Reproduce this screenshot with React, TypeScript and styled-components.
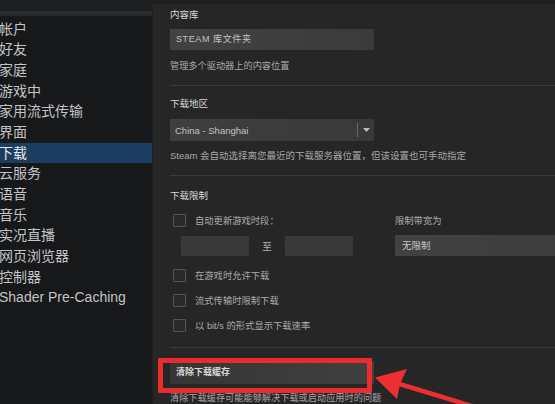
import styled, { createGlobalStyle } from 'styled-components'

const GlobalStyle = createGlobalStyle`
  html, body {
    margin: 0;
    padding: 0;
    background: #262626;
    overflow: hidden;
  }
  * {
    box-sizing: border-box;
  }
`

const CJK = `"Liberation Sans", "Noto Sans CJK SC", sans-serif`

const navItems = [
  '帐户',
  '好友',
  '家庭',
  '游戏中',
  '家用流式传输',
  '界面',
  '下载',
  '云服务',
  '语音',
  '音乐',
  '实况直播',
  '网页浏览器',
  '控制器',
  'Shader Pre-Caching',
]

const App = () => {
  return (
    <>
      <GlobalStyle />
      <Page>
        <Sidebar>
          <SideTop />
          <SideBand />
          <NavList>
            {navItems.map((item) => (
              <NavItem key={item} $active={item === '下载'}>
                {item}
              </NavItem>
            ))}
          </NavList>
        </Sidebar>

        <Main>
          <MainTop />
          <Content>
            <Label>内容库</Label>
            <Button $mt={8}>STEAM 库文件夹</Button>
            <Desc $mt={10}>管理多个驱动器上的内容位置</Desc>
            <Rule $mt={13} />

            <Label $mt={12}>下载地区</Label>
            <Select $mt={9}>
              <span>China - Shanghai</span>
              <SelectArrow>
                <svg width="7" height="4" viewBox="0 0 7 4">
                  <path d="M0 0h7L3.5 4z" fill="#bdbdbd" />
                </svg>
              </SelectArrow>
            </Select>
            <Desc $mt={9} $size={9.5}>
              Steam 会自动选择离您最近的下载服务器位置，但该设置也可手动指定
            </Desc>
            <Rule $mt={13} />

            <Label $mt={14}>下载限制</Label>
            <LimitGrid>
              <CheckRow>
                <Box />
                <CheckText>自动更新游戏时段：</CheckText>
              </CheckRow>
              <SmallLabel>限制带宽为</SmallLabel>
              <TimeRow>
                <TimeInput />
                <To>至</To>
                <TimeInput />
              </TimeRow>
              <WideSelect>无限制</WideSelect>
            </LimitGrid>
            <CheckRow $mt={12.5}>
              <Box />
              <CheckText>在游戏时允许下载</CheckText>
            </CheckRow>
            <CheckRow $mt={12}>
              <Box />
              <CheckText>流式传输时限制下载</CheckText>
            </CheckRow>
            <CheckRow $mt={12}>
              <Box />
              <CheckText>以 bit/s 的形式显示下载速率</CheckText>
            </CheckRow>
            <Rule $mt={15.5} />

            <ClearButton $mt={13}>清除下载缓存</ClearButton>
            <Desc $mt={8}>清除下载缓存可能能够解决下载或启动应用时的问题</Desc>
          </Content>
        </Main>

        <Highlight />
        <Arrow width="555" height="404" viewBox="0 0 555 404">
          <line
            x1="398"
            y1="383.5"
            x2="480"
            y2="408.5"
            stroke="#ee2f31"
            strokeWidth="4.5"
            strokeLinecap="round"
          />
          <polygon
            points="375,377.5 407,369 400,384 397,399"
            fill="#ee2f31"
          />
        </Arrow>
      </Page>
    </>
  )
}

const Page = styled.div`
  position: relative;
  display: flex;
  width: 555px;
  height: 404px;
  overflow: hidden;
  font-family: ${CJK};
`

const Sidebar = styled.nav`
  width: 152px;
  flex-shrink: 0;
  display: flex;
  flex-direction: column;
  background: #17181a;
`

const SideTop = styled.div`
  height: 11px;
  background: #1e1f21;
`

const SideBand = styled.div`
  height: 5px;
  background: linear-gradient(#2d2e30, #252628);
`

const NavList = styled.ul`
  list-style: none;
  margin: 0;
  padding: 2.5px 0 0;
`

const NavItem = styled.li<{ $active?: boolean }>`
  height: 20.7px;
  line-height: 20.7px;
  padding-left: 0;
  margin-left: -1px;
  font-size: 14px;
  white-space: nowrap;
  color: ${(p) => (p.$active ? '#e6e9ee' : '#c3c4c6')};
  background: ${(p) => (p.$active ? '#1c3d60' : 'transparent')};
`

const Main = styled.main`
  flex: 1;
  display: flex;
  flex-direction: column;
  background: #262626;
  border-left: 1px solid #1f1f20;
  min-width: 0;
`

const MainTop = styled.div`
  height: 8px;
  background: #1d1e20;
`

const Content = styled.div`
  display: flex;
  flex-direction: column;
  padding: 5px 0 0 17px;
`

const Label = styled.div<{ $mt?: number }>`
  margin-top: ${(p) => p.$mt ?? 0}px;
  height: 12px;
  line-height: 12px;
  font-size: 9.5px;
  color: #d6d6d6;
`

const Desc = styled.div<{ $mt?: number; $size?: number }>`
  margin-top: ${(p) => p.$mt ?? 0}px;
  height: 12px;
  line-height: 12px;
  font-size: ${(p) => p.$size ?? 9.2}px;
  color: #a6a6a6;
  white-space: nowrap;
`

const Rule = styled.hr<{ $mt?: number }>`
  margin: ${(p) => p.$mt ?? 0}px 0 0;
  border: 0;
  height: 1px;
  background: #3b3b3b;
`

const Button = styled.div<{ $mt?: number }>`
  margin-top: ${(p) => p.$mt ?? 0}px;
  width: 204px;
  height: 21px;
  line-height: 21px;
  padding-left: 6px;
  font-size: 9px;
  letter-spacing: 0.6px;
  color: #c2c2c2;
  background: linear-gradient(to right, #424242, #3b3b3b);
  border-radius: 1px;
`

const Select = styled.div<{ $mt?: number }>`
  margin-top: ${(p) => p.$mt ?? 0}px;
  width: 204px;
  height: 22px;
  display: flex;
  align-items: center;
  justify-content: space-between;
  padding-left: 5px;
  font-size: 9.5px;
  color: #c4c4c4;
  background: linear-gradient(to right, #3f3f3f, #393939);
  border-radius: 1px;
`

const SelectArrow = styled.span`
  display: flex;
  align-items: center;
  justify-content: center;
  width: 17px;
  height: 14px;
  border-left: 1px solid #6a6a6a;
`

const LimitGrid = styled.div`
  margin-top: 11px;
  display: grid;
  grid-template-columns: 225px 204px;
  row-gap: 8px;
  align-items: center;
`

const CheckRow = styled.div<{ $mt?: number }>`
  margin-top: ${(p) => p.$mt ?? 0}px;
  display: flex;
  align-items: center;
  height: 13px;
  padding-left: 3px;
  gap: 9px;
`

const Box = styled.span`
  width: 13px;
  height: 13px;
  border: 1px solid #555555;
  border-radius: 1px;
  background: #2a2a2a;
`

const CheckText = styled.span`
  font-size: 9.3px;
  color: #ababab;
  white-space: nowrap;
`

const SmallLabel = styled.span`
  font-size: 9.3px;
  color: #ababab;
`

const TimeRow = styled.div`
  display: flex;
  align-items: center;
  padding-left: 11px;
  height: 20px;
`

const TimeInput = styled.span`
  width: 68px;
  height: 20px;
  background: #393939;
  border-radius: 1px;
`

const To = styled.span`
  width: 36px;
  text-align: center;
  font-size: 9.5px;
  color: #b0b0b0;
`

const WideSelect = styled.div`
  height: 21px;
  line-height: 21px;
  padding-left: 7px;
  font-size: 9.5px;
  color: #c8c8c8;
  background: linear-gradient(to right, #424242, #3c3c3c);
  border-radius: 1px;
`

const ClearButton = styled.div<{ $mt?: number }>`
  margin-top: ${(p) => p.$mt ?? 0}px;
  width: 204px;
  height: 23px;
  line-height: 23px;
  padding-left: 6px;
  font-size: 9px;
  font-weight: bold;
  color: #dadada;
  background: linear-gradient(to right, #353535, #404040);
  border-radius: 1px;
`

const Highlight = styled.div`
  position: absolute;
  left: 158px;
  top: 358px;
  width: 214px;
  height: 35px;
  border: 5px solid #ec2b2e;
  border-radius: 1px;
  pointer-events: none;
`

const Arrow = styled.svg`
  position: absolute;
  left: 0;
  top: 0;
  pointer-events: none;
`

export default App
